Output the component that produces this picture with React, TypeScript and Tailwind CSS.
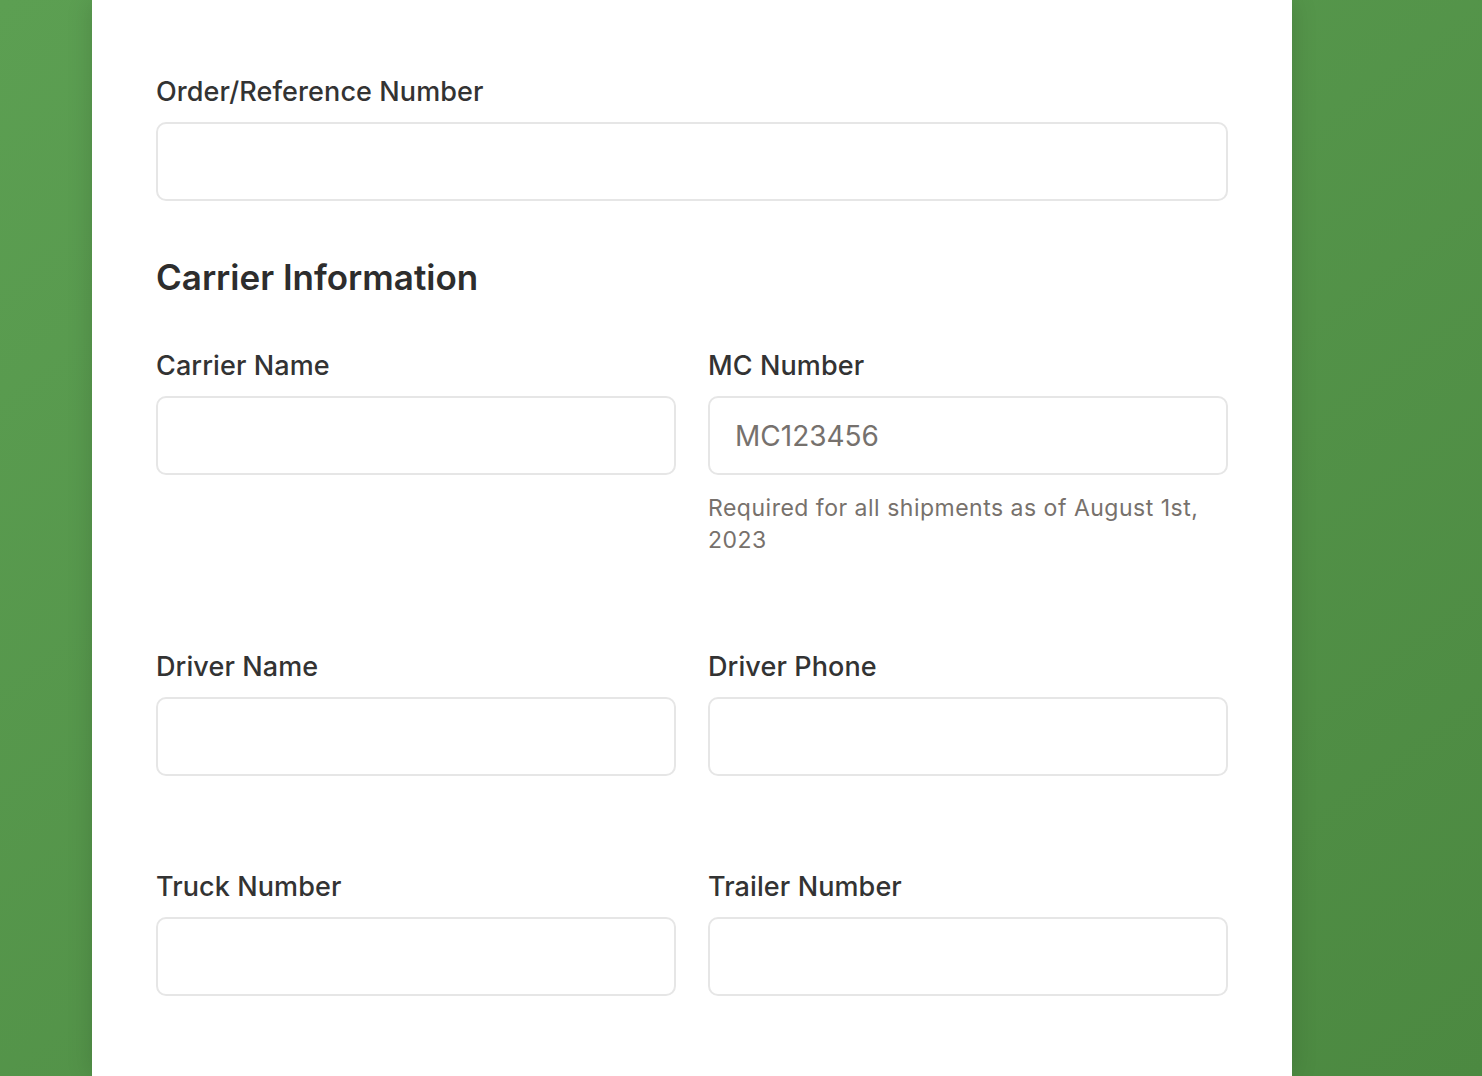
import React from "react";

function Field({
  label,
  placeholder,
  helper,
}: {
  label: string;
  placeholder?: string;
  helper?: string;
}) {
  return (
    <div className="flex flex-col">
      <label className="mb-[11px] text-[27px] leading-[38px] font-medium tracking-[0.1px] text-[#333333]">
        {label}
      </label>
      <input
        type="text"
        placeholder={placeholder}
        className="h-[79px] w-full rounded-[10px] border-2 border-[#e6e6e6] bg-white px-[25px] text-[28px] text-[#333] placeholder:text-[#76716d] outline-none"
      />
      {helper && (
        <p className="mt-[17px] text-[23px] leading-[32px] tracking-[0.5px] text-[#77716c]">{helper}</p>
      )}
    </div>
  );
}

export default function App() {
  return (
    <div
      className="h-[1076px] w-full overflow-hidden bg-gradient-to-br from-[#5c9f52] to-[#4c8941] pl-[92px]"
      style={{ fontFamily: "Inter, 'Noto Sans', sans-serif" }}
    >
      <div className="h-full w-[1200px] bg-white px-[64px] pt-[73px] shadow-[0_0_24px_rgba(0,0,0,0.15)]">
        <Field label="Order/Reference Number" />

        <h2 className="mt-[55px] mb-[49px] text-[35px] leading-[42px] font-semibold text-[#2d2d2d]">
          Carrier Information
        </h2>

        <div className="grid grid-cols-2 gap-x-[32px] gap-y-[92px]">
          <Field label="Carrier Name" />
          <Field
            label="MC Number"
            placeholder="MC123456"
            helper="Required for all shipments as of August 1st, 2023"
          />
          <Field label="Driver Name" />
          <Field label="Driver Phone" />
          <Field label="Truck Number" />
          <Field label="Trailer Number" />
        </div>
      </div>
    </div>
  );
}
